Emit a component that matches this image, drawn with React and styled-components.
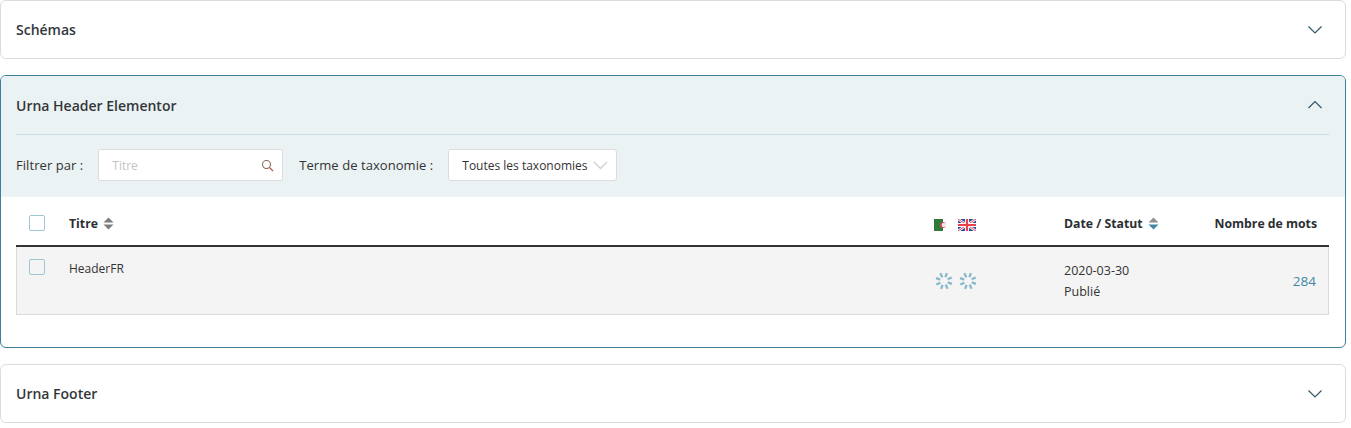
import React from 'react';
import styled, { createGlobalStyle } from 'styled-components';

const Global = createGlobalStyle`
  html, body { margin: 0; padding: 0; background: #fff; }
  body { font-family: "Open Sans", "Noto Sans", sans-serif; color: #333; font-size: 12px; }
  * { box-sizing: border-box; }
`;
const Page = styled.div`
  width: 1346px;
  display: flex;
  flex-direction: column;
  gap: 16px;
`;
const Card = styled.section`
  border: 1px solid ${p => (p.$open ? '#3f7f9a' : '#dcdcdc')};
  border-radius: 6px;
  background: #fff;
  overflow: hidden;
  padding-bottom: ${p => (p.$open ? '32px' : '0')};
`;
const CardHead = styled.header`
  height: ${p => (p.$open ? '59px' : '57px')};
  margin: 0 16px 0 15px;
  display: flex;
  align-items: center;
  justify-content: space-between;
  border-bottom: ${p => (p.$open ? '1px solid #c9dde6' : 'none')};
  padding-right: 6px;
`;
const CardTitle = styled.h3`
  margin: 0;
  font-size: 14px;
  font-weight: 600;
  color: #33373a;
`;
const Panel = styled.div`
  background: #ebf2f4;
`;
const FilterBar = styled.div`
  height: 62px;
  padding: 14px 15px 16px;
  display: flex;
  align-items: center;
`;
const FilterLabel = styled.label`
  font-size: 13px;
  letter-spacing: 0.06px;
  color: #333;
  margin-right: 15px;
`;
const SearchBox = styled.div`
  width: 185px;
  height: 32px;
  background: #fff;
  border: 1px solid #dcdcdc;
  border-radius: 2px;
  display: flex;
  align-items: center;
  justify-content: space-between;
  padding: 0 8px 0 13px;
  margin-right: 16px;
  font-size: 12px;
  color: #c4c4c4;
`;
const SelectBox = styled.div`
  width: 169px;
  height: 32px;
  background: #fff;
  border: 1px solid #dcdcdc;
  border-radius: 3px;
  display: flex;
  align-items: center;
  justify-content: space-between;
  padding: 0 8px 0 13px;
  font-size: 12px;
  color: #333;
`;
const Table = styled.div`
  margin: 0 15px;
  width: 1313px;
`;
const HeadRow = styled.div`
  display: grid;
  grid-template-columns: 40px 865px 130px 150px 1fr;
  height: 50px;
  padding: 4px 12px 0 13px;
  align-items: center;
  border-bottom: 2px solid #333;
`;
const BodyRow = styled.div`
  display: grid;
  grid-template-columns: 40px 865px 130px 150px 1fr;
  height: 68px;
  padding: 0 12px;
  background: #f4f4f4;
  border: 1px solid #dadada;
  border-top: none;
`;
const Check = styled.span`
  display: block;
  width: 16px;
  height: 16px;
  background: ${p => (p.$tint ? '#f4f4f4' : '#fff')};
  border: 1px solid #9cc6d4;
  border-radius: 2px;
  margin-top: ${p => p.$top || 0}px;
`;
const HeadCell = styled.div`
  font-size: 12.25px;
  font-weight: 700;
  color: #2b2f33;
  display: flex;
  align-items: center;
  gap: 5px;
  justify-content: ${p => (p.$right ? 'flex-end' : 'flex-start')};
  white-space: nowrap;
`;
const FlagCell = styled.div`
  display: flex;
  align-items: center;
  gap: 6px;
  padding-top: 3px;
`;
const TitleCell = styled.div`
  font-size: 12px;
  color: #333;
  padding-top: 12px;
  line-height: 20px;
`;
const SpinCell = styled.div`
  display: flex;
  gap: 6px;
  padding-top: 25px;
  margin-left: 1px;
`;
const DateCell = styled.div`
  font-size: 12.5px;
  line-height: 21px;
  color: #333;
  padding-top: 13px;
`;
const CountCell = styled.div`
  font-size: 13.5px;
  color: #3f87a3;
  text-align: right;
  padding-top: 24px;
  line-height: 20px;
`;

const Chevron = ({ up }) => (
  <svg width="16" height="10" viewBox="0 0 16 10" fill="none" stroke="#33566b" strokeWidth="1.2">
    <path d={up ? 'M1.5 8 L8 1.5 L14.5 8' : 'M1.5 1.5 L8 8 L14.5 1.5'} />
  </svg>
);
const Sort = ({ active }) => (
  <svg width="11" height="13" viewBox="0 0 11 13">
    <path d="M5.5 0.5 L10.5 5.5 H0.5 Z" fill={active ? '#8f8f8f' : '#7d7d7d'} />
    <path d="M0.5 7.5 H10.5 L5.5 12.5 Z" fill={active ? '#3f87a3' : '#7d7d7d'} />
  </svg>
);
const Spinner = () => (
  <svg width="18" height="18" viewBox="0 0 18 18" stroke="#86b8c9" strokeWidth="2.2">
    {[20, 65, 110, 155, 200, 245, 290, 335].map(a => (
      <line key={a} x1="9" y1="0.5" x2="9" y2="5" transform={`rotate(${a} 9 9)`} />
    ))}
  </svg>
);
const Algeria = () => (
  <svg width="18" height="12" viewBox="0 0 18 12">
    <rect width="9" height="12" fill="#2f7a3a" />
    <rect x="9" width="9" height="12" fill="#fff" />
    <circle cx="9" cy="6" r="3" fill="#c9485b" />
    <circle cx="10" cy="6" r="2.3" fill="#f1e9e9" />
  </svg>
);
const UK = () => (
  <svg width="18" height="12" viewBox="0 0 18 12">
    <rect width="18" height="12" fill="#2a4f9e" />
    <path d="M0 0 L18 12 M18 0 L0 12" stroke="#fff" strokeWidth="2.4" />
    <path d="M0 0 L18 12 M18 0 L0 12" stroke="#e8505b" strokeWidth="1" />
    <path d="M9 0 V12 M0 6 H18" stroke="#fff" strokeWidth="4" />
    <path d="M9 0 V12 M0 6 H18" stroke="#e8404f" strokeWidth="2.2" />
  </svg>
);
const Search = () => (
  <svg width="13" height="13" viewBox="0 0 13 13" fill="none" stroke="#8a6a5c" strokeWidth="1.1">
    <circle cx="5.5" cy="5.5" r="4" />
    <path d="M8.5 8.5 L12 12" stroke="#b4553a" />
  </svg>
);
const SelectArrow = () => (
  <svg width="15" height="9" viewBox="0 0 15 9" fill="none" stroke="#cfcfcf" strokeWidth="1.3">
    <path d="M1 1 L7.5 7.5 L14 1" />
  </svg>
);

export default function App() {
  return (
    <>
      <Global />
      <Page>
        <Card>
          <CardHead>
            <CardTitle>Schémas</CardTitle>
            <Chevron />
          </CardHead>
        </Card>
        <Card $open>
          <Panel>
            <CardHead $open>
              <CardTitle>Urna Header Elementor</CardTitle>
              <Chevron up />
            </CardHead>
            <FilterBar>
              <FilterLabel>Filtrer par :</FilterLabel>
              <SearchBox>
                <span>Titre</span>
                <Search />
              </SearchBox>
              <FilterLabel>Terme de taxonomie :</FilterLabel>
              <SelectBox>
                <span>Toutes les taxonomies</span>
                <SelectArrow />
              </SelectBox>
            </FilterBar>
          </Panel>
          <Table>
            <HeadRow>
              <Check />
              <HeadCell>Titre <Sort /></HeadCell>
              <FlagCell><Algeria /><UK /></FlagCell>
              <HeadCell>Date / Statut <Sort active /></HeadCell>
              <HeadCell $right>Nombre de mots</HeadCell>
            </HeadRow>
            <BodyRow>
              <Check $top={12} $tint />
              <TitleCell>HeaderFR</TitleCell>
              <SpinCell><Spinner /><Spinner /></SpinCell>
              <DateCell>2020-03-30<br />Publié</DateCell>
              <CountCell>284</CountCell>
            </BodyRow>
          </Table>
        </Card>
        <Card>
          <CardHead>
            <CardTitle>Urna Footer</CardTitle>
            <Chevron />
          </CardHead>
        </Card>
      </Page>
    </>
  );
}
